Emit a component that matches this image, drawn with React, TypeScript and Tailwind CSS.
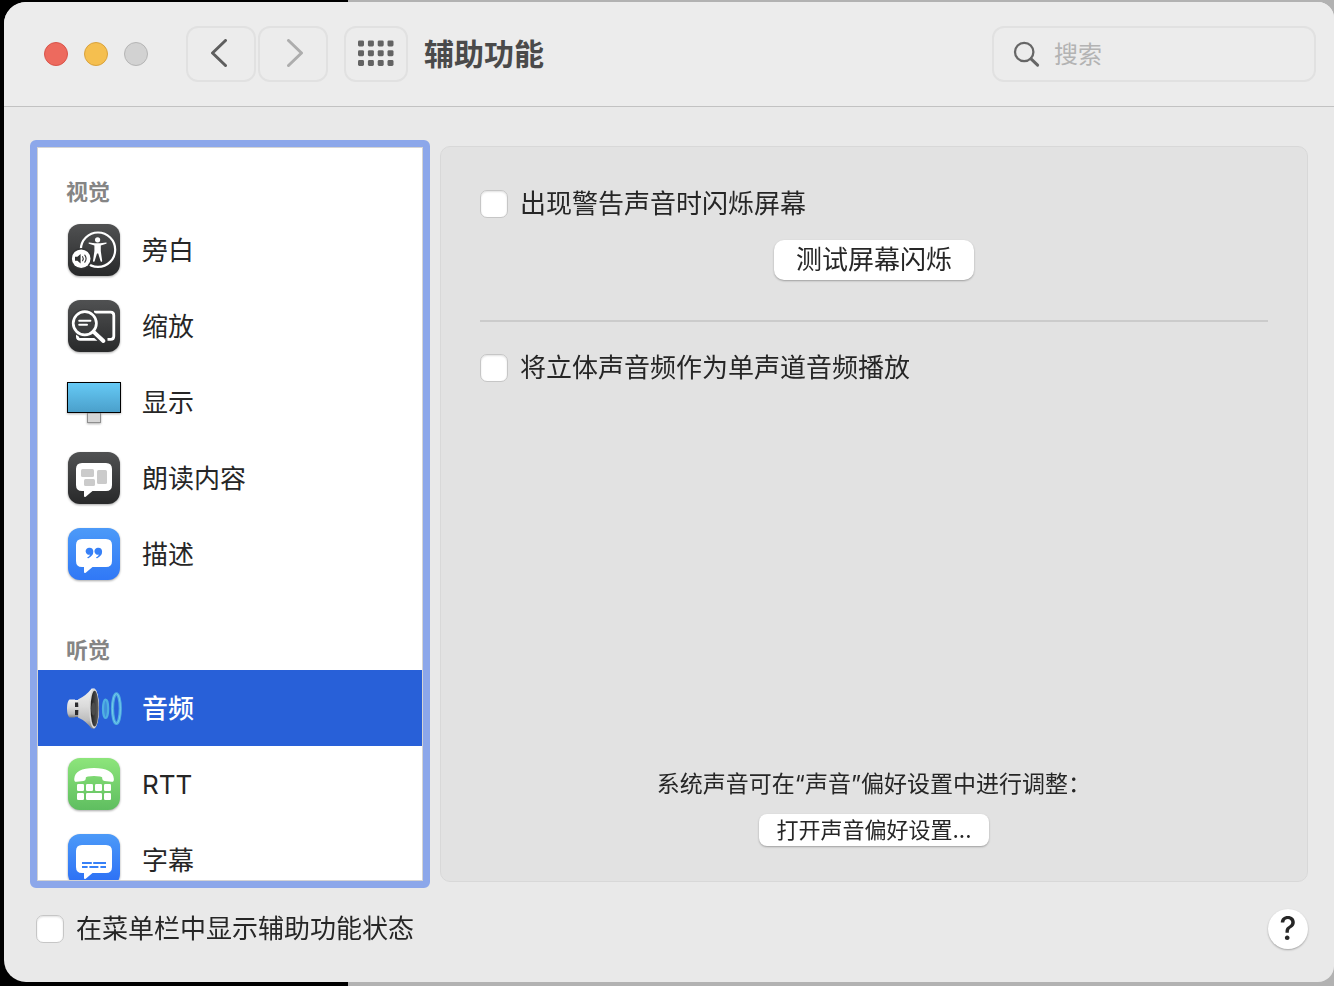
import type { ReactNode } from "react";
import clsx from "clsx";

function Tile({ from, to, id, children }: { from: string; to: string; id: string; children: ReactNode }) {
  return (
    <svg viewBox="0 0 60 60" className="size-15 shrink-0 drop-shadow-[0_1px_1px_rgba(0,0,0,0.35)]" aria-hidden="true">
      <defs>
        <linearGradient id={id} x1="0" y1="0" x2="0" y2="1">
          <stop offset="0" stopColor={from} />
          <stop offset="1" stopColor={to} />
        </linearGradient>
      </defs>
      <rect x="4" y="4" width="52" height="52" rx="12" fill={`url(#${id})`} />
      {children}
    </svg>
  );
}

const BUBBLE =
  "M18 15H42Q48 15 48 21V37Q48 43 42 43H28.5L22 48.4Q20 49.8 20 47.4V43H18Q12 43 12 37V21Q12 15 18 15Z";

function VoiceOverIcon() {
  return (
    <Tile id="voiceover" from="#505152" to="#28292a">
      <circle cx="34" cy="29.7" r="17.2" fill="none" stroke="#fff" strokeWidth="2.2" />
      <circle cx="33.6" cy="19.8" r="2.6" fill="#fff" />
      <path
        d="M25 22.4L31 23.3H36.2L42.2 22.4Q43.4 22.9 42.2 23.8L36.8 25.4V31L38.2 41Q37.6 42.6 36.6 41.2L34.2 33.6H33L30.6 41.2Q29.5 42.6 29 41L30.4 31V25.4L25 23.8Q23.8 22.9 25 22.4Z"
        fill="#fff"
      />
      <circle cx="17.2" cy="38.7" r="10.8" fill="#343536" />
      <circle cx="17.2" cy="38.7" r="9.3" fill="#fff" />
      <path d="M11 36.7H13.4L16.6 34V43.4L13.4 40.7H11Z" fill="#303132" />
      <path d="M18.6 36.7Q20 38.7 18.6 40.7M20.8 35.2Q23.4 38.7 20.8 42.2" fill="none" stroke="#303132" strokeWidth="1.1" strokeLinecap="round" />
    </Tile>
  );
}

function ZoomIcon() {
  return (
    <Tile id="zoom" from="#505152" to="#28292a">
      <path
        d="M30 16.2H46.6Q49.8 16.2 49.8 19.4V40.2Q49.8 43.4 46.6 43.4H43.5M13.4 37V40.4Q13.4 43.4 16.4 43.4H33.5"
        fill="none"
        stroke="#fff"
        strokeWidth="2.8"
      />
      <path d="M29 36L39.5 45.2" stroke="#37383a" strokeWidth="7.5" />
      <circle cx="20.8" cy="27.3" r="14.4" fill="#3d3e3f" />
      <circle cx="20.8" cy="27.3" r="11.6" fill="none" stroke="#fff" strokeWidth="2.7" />
      <path d="M29.4 35.6L39.4 45" stroke="#fff" strokeWidth="4" strokeLinecap="round" />
      <path d="M15.2 24.8H26.4M15.2 28.8H23" stroke="#fff" strokeWidth="2" strokeLinecap="round" />
    </Tile>
  );
}

function DisplayIcon() {
  return (
    <svg viewBox="0 0 60 60" className="size-15 shrink-0 drop-shadow-[0_1px_1px_rgba(0,0,0,0.3)]" aria-hidden="true">
      <defs>
        <linearGradient id="screen" x1="0" y1="0" x2="0" y2="1">
          <stop offset="0" stopColor="#66caf6" />
          <stop offset="1" stopColor="#4a9fca" />
        </linearGradient>
      </defs>
      <rect x="23.5" y="41" width="13" height="9.5" fill="#d6d6d6" stroke="#8f8f8f" />
      <rect x="3.5" y="10.5" width="53" height="30" fill="url(#screen)" stroke="#000" />
    </svg>
  );
}

function SpokenIcon() {
  return (
    <Tile id="spoken" from="#505152" to="#28292a">
      <path d={BUBBLE} fill="#fff" />
      <rect x="17" y="21" width="13" height="8" rx="1.5" fill="#cbcbcb" />
      <rect x="33" y="22" width="10" height="14" rx="1.5" fill="#cbcbcb" />
      <rect x="20" y="31" width="11" height="7" rx="1.5" fill="#cbcbcb" />
    </Tile>
  );
}

function DescriptionsIcon() {
  return (
    <Tile id="descriptions" from="#4c9af8" to="#3078f6">
      <path d={BUBBLE} fill="#fff" />
      <path
        d="M25.6 23.8A3.5 3.5 0 1 0 26.2 30.6Q25.4 32.4 23.2 33.5Q23.6 34.6 24.4 34.2Q29.4 32 29.3 27.6Q29.2 24 25.6 23.8ZM34.4 23.8A3.5 3.5 0 1 0 35 30.6Q34.2 32.4 32 33.5Q32.4 34.6 33.2 34.2Q38.2 32 38.1 27.6Q38 24 34.4 23.8Z"
        fill="#3680f7"
      />
    </Tile>
  );
}

function AudioIcon() {
  return (
    <svg viewBox="0 0 60 60" className="size-15 shrink-0" aria-hidden="true">
      <defs>
        <linearGradient id="cone" x1="0" y1="0" x2="0" y2="1">
          <stop offset="0" stopColor="#f0f0f0" />
          <stop offset="0.45" stopColor="#dadada" />
          <stop offset="0.8" stopColor="#bcbcbc" />
          <stop offset="1" stopColor="#808080" />
        </linearGradient>
        <linearGradient id="inner" x1="0" y1="0" x2="1" y2="0">
          <stop offset="0" stopColor="#1c1c1c" />
          <stop offset="1" stopColor="#606060" />
        </linearGradient>
      </defs>
      <path d="M9 22H16V39H9Z" fill="url(#cone)" />
      <path d="M10.5 24.5H14.5V29H10.5ZM10.5 32H14.5V37H10.5Z" fill="#2b2b2d" />
      <path d="M5.5 21.5H11V39.5H5.5Q3 37.5 3 30.5Q3 23.5 5.5 21.5Z" fill="url(#cone)" />
      <path d="M14 21.5Q22 18 27.6 10.6H30.5Q35 14 35 30.7Q35 47 30.5 50.6H27.6Q22 43 14 39.5Q15.5 30.5 14 21.5Z" fill="url(#cone)" />
      <ellipse cx="30" cy="30.6" rx="4.9" ry="19.8" fill="#d9d9d9" />
      <ellipse cx="30.6" cy="30.6" rx="4" ry="17.8" fill="url(#inner)" />
      <ellipse cx="29.4" cy="31" rx="2.2" ry="6.5" fill="#4b4b4b" />
      <ellipse cx="41.6" cy="30.8" rx="2.6" ry="9.2" fill="#3f8fdc" stroke="#4fb0e2" strokeWidth="2.2" />
      <ellipse cx="52.4" cy="30.6" rx="3.9" ry="14.8" fill="none" stroke="#4dace0" strokeWidth="3.2" />
      <ellipse cx="52.4" cy="30.6" rx="4" ry="15" fill="none" stroke="#7fd0ec" strokeWidth="0.8" />
    </svg>
  );
}

function RttIcon() {
  return (
    <Tile id="rtt" from="#8de57b" to="#5fbe60">
      <path
        d="M10.3 24.5Q11 14.2 30 14Q49 14.2 49.8 24.5Q50.3 28.2 47.5 27.8L40.5 27Q38.2 26.7 38.2 24.4V23.6Q38 22 30 22Q22 22 21.8 23.6V24.4Q21.8 26.7 19.5 27L12.6 27.8Q9.9 28.2 10.3 24.5Z"
        fill="#fff"
      />
      {[13, 22, 31, 40].map((x) => (
        <rect key={x} x={x} y="30" width="7" height="7" rx="1.3" fill="#fff" />
      ))}
      <rect x="13" y="39" width="7" height="7" rx="1.3" fill="#fff" />
      <rect x="22" y="39" width="16" height="7" rx="1.3" fill="#fff" />
      <rect x="40" y="39" width="7" height="7" rx="1.3" fill="#fff" />
    </Tile>
  );
}

function CaptionsIcon() {
  return (
    <Tile id="captions" from="#4c9af8" to="#2a6df5">
      <path d={BUBBLE} fill="#fff" />
      <path d="M18 33H27.8M29.2 33H42M18 37H23.6M25.4 37H34.4M36.4 37H42" stroke="#3680f7" strokeWidth="1.8" />
    </Tile>
  );
}

const sections = [
  {
    title: "视觉",
    items: [
      { name: "旁白", icon: <VoiceOverIcon /> },
      { name: "缩放", icon: <ZoomIcon /> },
      { name: "显示", icon: <DisplayIcon /> },
      { name: "朗读内容", icon: <SpokenIcon /> },
      { name: "描述", icon: <DescriptionsIcon /> },
    ],
  },
  {
    title: "听觉",
    items: [
      { name: "音频", icon: <AudioIcon />, selected: true },
      { name: "RTT", icon: <RttIcon /> },
      { name: "字幕", icon: <CaptionsIcon /> },
    ],
  },
];

function Checkbox({ label }: { label: string }) {
  return (
    <label className="flex h-9 items-center gap-3 text-[26px] leading-9">
      <input
        type="checkbox"
        className="size-7 shrink-0 appearance-none rounded-[7px] border border-[#c6c6c6] bg-white shadow-[inset_0_1px_2px_rgba(0,0,0,0.12)] checked:bg-[#2860d8]"
      />
      {label}
    </label>
  );
}

function Toolbar() {
  return (
    <header className="flex h-[105px] shrink-0 items-center border-b border-[#c2c2c2] bg-[#ececec] pr-[18px] pl-10">
      <div className="flex gap-4">
        <button aria-label="关闭" className="size-6 rounded-full border border-[#d9544a] bg-[#ed6a5e]" />
        <button aria-label="最小化" className="size-6 rounded-full border border-[#d9a23c] bg-[#f5bf4f]" />
        <button aria-label="缩放窗口" className="size-6 rounded-full border border-[#b5b5b5] bg-[#d2d2d2]" />
      </div>
      <div className="ml-[38px] flex gap-0.5">
        <button aria-label="后退" className="flex h-14 w-[70px] items-center justify-center rounded-xl border-2 border-[#e1e1e1]">
          <svg viewBox="0 0 30 30" className="size-[30px]" fill="none" stroke="#5e5e5e" strokeWidth="3" strokeLinecap="round" strokeLinejoin="round">
            <path d="M19.5 1.5L6.5 14L19.5 26.5" />
          </svg>
        </button>
        <button aria-label="前进" className="flex h-14 w-[70px] items-center justify-center rounded-xl border-2 border-[#e1e1e1]">
          <svg viewBox="0 0 30 30" className="size-[30px]" fill="none" stroke="#adadad" strokeWidth="3" strokeLinecap="round" strokeLinejoin="round">
            <path d="M10.5 1.5L23.5 14L10.5 26.5" />
          </svg>
        </button>
      </div>
      <button aria-label="显示全部" className="ml-4 flex h-14 w-16 items-center justify-center rounded-xl border-2 border-[#e1e1e1]">
        <svg viewBox="0 0 36 28" className="h-7 w-9" fill="#636363">
          {[0.4, 10.2, 20].map((y) =>
            [0, 9.9, 19.7, 29.5].map((x) => <rect key={`${x}-${y}`} x={x} y={y} width="6" height="6" rx="1.4" />)
          )}
        </svg>
      </button>
      <h1 className="ml-4 text-[30px] leading-10 font-bold text-[#4a4a4a]">辅助功能</h1>
      <label className="ml-auto flex h-14 w-[324px] items-center gap-3 rounded-xl border-2 border-[#e1e1e1] pl-[18px]">
        <svg viewBox="0 0 30 30" className="size-[30px] shrink-0" fill="none" stroke="#666" strokeWidth="2.3" strokeLinecap="round">
          <circle cx="12.2" cy="13" r="9.2" />
          <path d="M19 19.8L25.6 26.2" strokeWidth="3" />
        </svg>
        <input
          type="search"
          aria-label="搜索"
          placeholder="搜索"
          className="min-w-0 flex-1 bg-transparent pt-0.5 text-2xl outline-none placeholder:text-[#b3b3b3]"
        />
      </label>
    </header>
  );
}

function Sidebar() {
  return (
    <nav className="flex w-[400px] shrink-0 flex-col rounded-md border-[7px] border-[#8ca7ea]">
      <div className="min-h-0 flex-1 overflow-y-auto border border-[#d4d4d4] bg-white pt-6 [scrollbar-width:none]">
        {sections.map((section) => (
          <section key={section.title} className="mb-[38px]">
            <h2 className="pl-7 text-[22px] leading-10 font-bold text-[#858585]">{section.title}</h2>
            {section.items.map((item) => (
              <button
                key={item.name}
                className={clsx(
                  "flex h-19 w-full items-center gap-[18px] pl-[26px] text-left text-[26px]",
                  item.selected && "bg-[#2860d8] font-medium text-white"
                )}
              >
                {item.icon}
                {item.name}
              </button>
            ))}
          </section>
        ))}
      </div>
    </nav>
  );
}

function AudioPanel() {
  return (
    <main className="my-1.5 flex min-w-0 flex-1 flex-col rounded-[10px] border border-[#d8d8d8] bg-[#e2e2e2] px-[39px] pt-[39px] pb-[35px]">
      <Checkbox label="出现警告声音时闪烁屏幕" />
      <button className="mt-[18px] flex h-10 w-[200px] items-center justify-center self-center rounded-[10px] bg-white text-[26px] leading-9 shadow-[0_1px_2px_rgba(0,0,0,0.3)]">
        测试屏幕闪烁
      </button>
      <hr className="mt-10 mb-7 border-t-2 border-[#cbcbcb]" />
      <Checkbox label="将立体声音频作为单声道音频播放" />
      <div className="mt-auto flex flex-col items-center gap-3">
        <p className="text-[23px] leading-9">系统声音可在“声音”偏好设置中进行调整：</p>
        <button className="flex h-8 w-[230px] items-center justify-center rounded-lg bg-white text-[22px] leading-8 shadow-[0_1px_2px_rgba(0,0,0,0.3)]">
          打开声音偏好设置...
        </button>
      </div>
    </main>
  );
}

export default function App() {
  return (
    <div
      lang="zh-CN"
      className="flex h-screen bg-[linear-gradient(to_right,#000_348px,#b2b2b2_348px)] pt-0.5 pb-1 pl-1 font-['Inter','Noto_Sans_CJK_SC',sans-serif] text-[#262626]"
    >
      <div className="flex min-w-0 flex-1 flex-col overflow-hidden rounded-l-[22px] rounded-r-2xl bg-[#e9e9e9]">
        <Toolbar />
        <div className="flex min-h-0 flex-1 gap-2.5 px-[26px] pt-[33px]">
          <Sidebar />
          <AudioPanel />
        </div>
        <footer className="flex h-[94px] shrink-0 items-center justify-between pr-[26px] pb-3 pl-8">
          <Checkbox label="在菜单栏中显示辅助功能状态" />
          <button
            aria-label="帮助"
            className="flex size-10 items-center justify-center rounded-full bg-white text-[32px] leading-none font-medium shadow-[0_1px_2px_rgba(0,0,0,0.3)]"
          >
            ?
          </button>
        </footer>
      </div>
    </div>
  );
}
